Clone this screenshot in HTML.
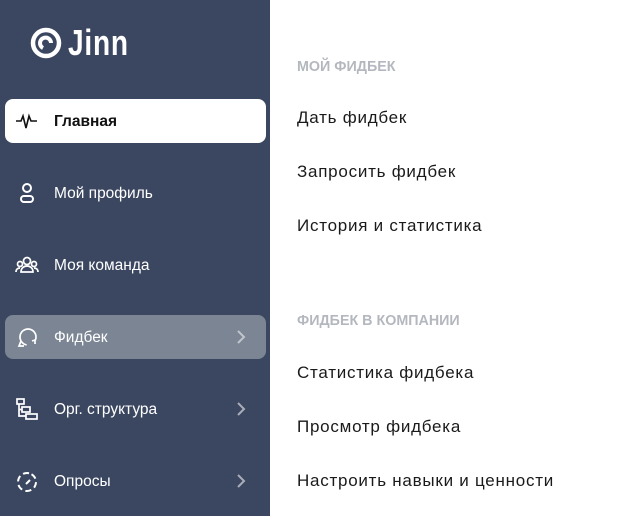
<!DOCTYPE html>
<html><head><meta charset="utf-8"><style>
*{margin:0;padding:0;box-sizing:border-box}
body{width:625px;height:516px;overflow:hidden;font-family:"Liberation Sans",sans-serif;background:#fff;position:relative}
.sb{position:absolute;left:0;top:0;width:270px;height:516px;background:#3b4760}
.logo{position:absolute;left:30px;top:22px;color:#fff;display:flex;align-items:center;gap:6px}
.logo span{font-size:36px;font-weight:bold;display:inline-block;transform:scaleX(0.78);transform-origin:left center;letter-spacing:1px}
.it{position:absolute;left:5px;width:261px;height:44px;border-radius:8px;color:#fff;font-size:15.5px;display:flex;align-items:center;padding-top:2px}
.it svg.i{position:absolute;left:10px;top:10px}
.it span{position:absolute;left:49px}
.it .ch{position:absolute;left:231px;top:15px}
.act{background:#fff;color:#111;font-weight:bold}
.hl{background:#7b8594}
.h{position:absolute;left:297px;color:#b4b8be;font-size:14.3px;font-weight:bold}
.l{position:absolute;left:297px;color:#1a1a1a;font-size:17px;letter-spacing:0.75px}
</style></head><body>
<div class="sb">
<div class="logo"><svg width="32" height="34" viewBox="0 0 32 34"><circle cx="16" cy="17" r="13" fill="none" stroke="#fff" stroke-width="4.5"/><path d="M13 22 a5.5 5.5 0 1 1 8 -5" fill="none" stroke="#fff" stroke-width="4"/></svg><span>Jinn</span></div>
<div class="it act" style="top:99px"><svg class="i" width="24" height="24" viewBox="0 0 24 24" fill="none" stroke="#111" stroke-width="1.6"><path d="M1 12h5l2-5 3 12 3-12 2 5h6"/></svg><span>Главная</span></div>
<div class="it" style="top:171px"><svg class="i" width="24" height="24" viewBox="0 0 24 24" fill="none" stroke="#fff" stroke-width="2"><circle cx="12" cy="7" r="4"/><rect x="6" y="15" width="12" height="6" rx="3"/></svg><span>Мой профиль</span></div>
<div class="it" style="top:243px"><svg class="i" width="24" height="24" viewBox="0 0 24 24" fill="none" stroke="#fff" stroke-width="1.7"><circle cx="12" cy="8" r="3.5"/><circle cx="5" cy="11" r="2.5"/><circle cx="19" cy="11" r="2.5"/><path d="M6 19c0-4 3-6 6-6s6 2 6 6zM1 19c0-3 2-4 4-4M23 19c0-3-2-4-4-4"/></svg><span>Моя команда</span></div>
<div class="it hl" style="top:315px"><svg class="i" width="24" height="24" viewBox="0 0 24 24" fill="none" stroke="#fff" stroke-width="1.7"><circle cx="13" cy="12" r="8" stroke-dasharray="40 10.3" transform="rotate(100 13 12)"/><path d="M6 16l-2 5h5"/><path d="M20 15l0 4M20 15l-3 1"/></svg><span>Фидбек</span><svg class="ch" width="10" height="14" viewBox="0 0 10 14" fill="none" stroke="#c0c5cc" stroke-width="2"><path d="M2 1l6 6-6 6"/></svg></div>
<div class="it" style="top:387px"><svg class="i" width="24" height="24" viewBox="0 0 24 24" fill="none" stroke="#fff" stroke-width="1.7"><rect x="2" y="2" width="7" height="5"/><rect x="7" y="10" width="8" height="5"/><rect x="11" y="17" width="11" height="5"/><path d="M4 7v12h7M4 12.5h3"/></svg><span>Орг. структура</span><svg class="ch" width="10" height="14" viewBox="0 0 10 14" fill="none" stroke="#a8aeb8" stroke-width="2"><path d="M2 1l6 6-6 6"/></svg></div>
<div class="it" style="top:459px"><svg class="i" width="24" height="24" viewBox="0 0 24 24" fill="none" stroke="#fff" stroke-width="2"><circle cx="12" cy="13" r="9" stroke-dasharray="6 3.5" transform="rotate(-60 12 13)"/><path d="M11 15l4-4"/></svg><span>Опросы</span><svg class="ch" width="10" height="14" viewBox="0 0 10 14" fill="none" stroke="#a8aeb8" stroke-width="2"><path d="M2 1l6 6-6 6"/></svg></div>
</div>
<div class="h" style="top:59px">МОЙ ФИДБЕК</div>
<div class="l" style="top:108px">Дать фидбек</div>
<div class="l" style="top:162px">Запросить фидбек</div>
<div class="l" style="top:216px">История и статистика</div>
<div class="h" style="top:313px">ФИДБЕК В КОМПАНИИ</div>
<div class="l" style="top:363px">Статистика фидбека</div>
<div class="l" style="top:417px">Просмотр фидбека</div>
<div class="l" style="top:471px">Настроить навыки и ценности</div>
</body></html>
